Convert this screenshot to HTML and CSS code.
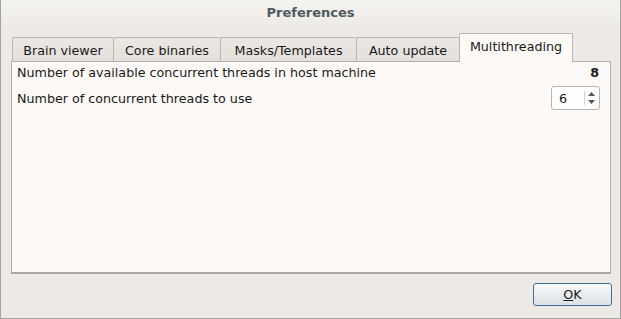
FILE: index.html
```html
<!DOCTYPE html>
<html>
   <head>
      <title>Preferences</title>
      <link rel="stylesheet" href="styles.css">
   </head>
   <body>
      <div class="window">
         <div class="titlebar">Preferences</div>
         <div class="tab-bar">
            <div class="tab">Brain viewer</div>
            <div class="tab">Core binaries</div>
            <div class="tab">Masks/Templates</div>
            <div class="tab">Auto update</div>
            <div class="tab active">Multithreading</div>
         </div>
         <div class="pane">
            <div class="row">
               <span>Number of available concurrent threads in host machine</span>
               <span class="value">8</span>
            </div>
            <div class="row">
               <span>Number of concurrent threads to use</span>
               <div class="spinbox">
                  <span class="spin-value">6</span>
                  <div class="spin-arrows">
                     <svg width="9" height="6" viewBox="0 0 9 6"><path d="M1 5 L4.5 1 L8 5 Z" fill="#555"/></svg>
                     <svg width="9" height="6" viewBox="0 0 9 6"><path d="M1 1 L4.5 5 L8 1 Z" fill="#555"/></svg>
                  </div>
               </div>
            </div>
         </div>
         <div class="footer">
            <button class="ok-btn"><u>O</u>K</button>
         </div>
      </div>
   </body>
</html>
```

FILE: styles.css
```css
         * {
         margin: 0;
         padding: 0;
         box-sizing: border-box;
         font-family: 'DejaVu Sans', sans-serif;
         }
         body {
         width: 621px;
         height: 319px;
         background: #edeae6;
         color: #1a1a1a;
         }
         .window {
         width: 621px;
         height: 319px;
         border: 1px solid #a3a3a3;
         border-top: none;
         background: #edeae6;
         display: flex;
         flex-direction: column;
         }
         .titlebar {
         height: 28px;
         display: flex;
         align-items: center;
         justify-content: center;
         font-size: 13px;
         font-weight: bold;
         color: #4f5a60;
         background: linear-gradient(#f5f3f0, #edeae6);
         padding-bottom: 3px;
         }
         .tab-bar {
         display: flex;
         align-items: flex-end;
         padding-left: 11px;
         height: 33px;
         }
         .tab {
         height: 25px;
         display: flex;
         align-items: center;
         justify-content: center;
         white-space: nowrap;
         flex-shrink: 0;
         font-size: 12.7px;
         border: 1px solid #b9b5b1;
         border-bottom: none;
         border-right: none;
         border-radius: 2px 2px 0 0;
         background: linear-gradient(#ebe8e4, #e3e0dc);
         margin-bottom: -1px;
         padding-top: 1px;
         }
         .tab:nth-child(1) { width: 101px; }
         .tab:nth-child(2) { width: 107px; }
         .tab:nth-child(3) { width: 136px; }
         .tab:nth-child(4) { width: 103px; }
         .tab.active {
         width: 114px;
         height: 29px;
         background: #fcf9f6;
         border-right: 1px solid #b9b5b1;
         padding: 0 0 4px;
         position: relative;
         z-index: 1;
         }
         .pane {
         margin: 0 9px 0 10px;
         height: 213px;
         background: #fcf9f6;
         border: 1px solid #b2aeaa;
         border-bottom: 2px solid #aaa6a2;
         padding: 0 10px 0 5px;
         }
         .row {
         display: flex;
         align-items: center;
         justify-content: space-between;
         font-size: 12.7px;
         }
         .row:first-child {
         height: 21px;
         }
         .row:nth-child(2) {
         height: 30px;
         }
         .value {
         font-weight: bold;
         padding-right: 1px;
         }
         .spinbox {
         width: 49px;
         height: 24px;
         margin-right: 0;
         background: #ffffff;
         border: 1px solid #b8b5b2;
         border-radius: 3px;
         display: flex;
         align-items: center;
         justify-content: space-between;
         padding: 0 3px 0 7px;
         font-size: 12.7px;
         }
         .spin-arrows {
         display: flex;
         flex-direction: column;
         gap: 2px;
         padding-left: 2px;
         border-left: 1px solid #d5d2cf;
         }
         .spin-arrows svg {
         display: block;
         }
         .footer {
         flex: 1;
         display: flex;
         justify-content: flex-end;
         align-items: flex-start;
         padding: 9px 8px 0 0;
         }
         .ok-btn {
         width: 79px;
         height: 23px;
         font-size: 12.7px;
         color: #1a1a1a;
         border: 1px solid #3f6f99;
         border-radius: 3px;
         background: linear-gradient(#f7f8f9, #dde2e6);
         }
         .ok-btn u {
         text-decoration-thickness: 1px;
         }
```
